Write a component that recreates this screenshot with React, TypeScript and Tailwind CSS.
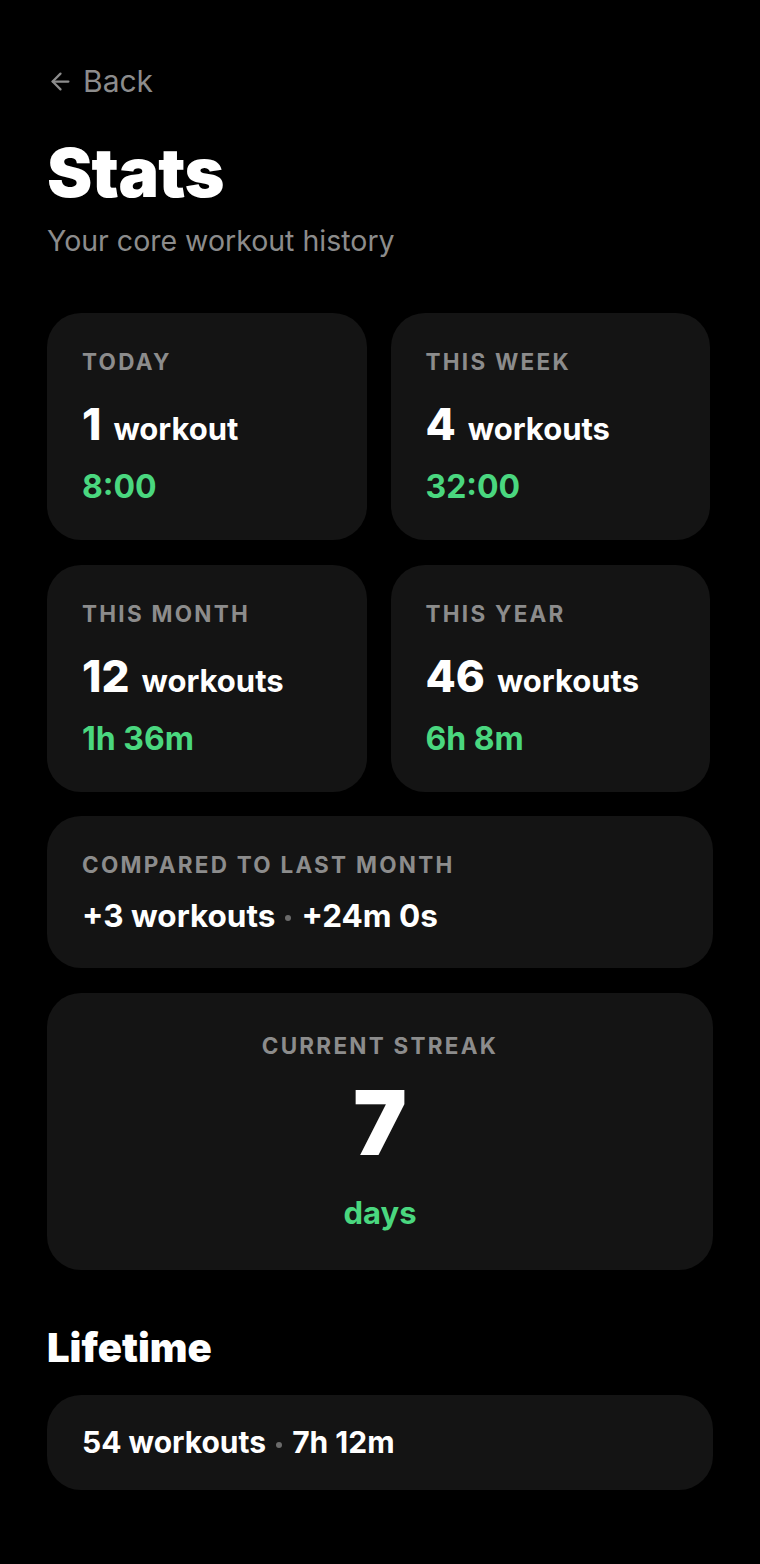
import { ArrowLeft } from "lucide-react";

interface PeriodCardProps {
  label: string;
  count: number;
  unit: string;
  time: string;
}

function PeriodCard({ label, count, unit, time }: PeriodCardProps) {
  return (
    <div className="h-[227px] rounded-[34px] bg-[#141414] pl-[35px] pt-[38px]">
      <div className="text-[22.5px] font-bold tracking-[0.1em] text-[#8c8c8c] leading-none">
        {label}
      </div>
      <div className="mt-[29px] flex items-baseline gap-[12px] leading-none text-white">
        <span className="text-[44px] font-extrabold">{count}</span>
        <span className="text-[31px] font-bold">{unit}</span>
      </div>
      <div className="mt-[25px] text-[32px] font-bold leading-none text-[#4ad77f]">
        {time}
      </div>
    </div>
  );
}

function Dot() {
  return <span className="mx-[10px] inline-block h-[6px] w-[6px] rounded-full bg-[#6b6b6b] align-middle" />;
}

export default function App() {
  return (
    <div
      className="min-h-[1564px] w-full bg-black text-white antialiased"
      style={{ fontFamily: "Inter, 'Noto Sans', sans-serif" }}
    >
      <div className="px-[47px] pt-[66px]">
        <button className="flex items-center gap-[9px] text-[30px] leading-none text-[#8c8c8c]">
          <ArrowLeft className="h-[27px] w-[27px]" strokeWidth={2} />
          <span>Back</span>
        </button>

        <h1 className="mt-[42px] text-[68px] font-black leading-none tracking-[-0.01em]">Stats</h1>
        <p className="mt-[21px] text-[28.5px] leading-none text-[#8c8c8c]">Your core workout history</p>

        <div className="mt-[57px] mr-[3px] grid grid-cols-2 gap-x-[24px] gap-y-[25px]">
          <PeriodCard label="TODAY" count={1} unit="workout" time="8:00" />
          <PeriodCard label="THIS WEEK" count={4} unit="workouts" time="32:00" />
          <PeriodCard label="THIS MONTH" count={12} unit="workouts" time="1h 36m" />
          <PeriodCard label="THIS YEAR" count={46} unit="workouts" time="6h 8m" />
        </div>

        <div className="mt-[24px] h-[152px] rounded-[34px] bg-[#141414] pl-[35px] pt-[38px]">
          <div className="text-[22.5px] font-bold tracking-[0.1em] text-[#8c8c8c] leading-none">
            COMPARED TO LAST MONTH
          </div>
          <div className="mt-[24px] text-[31.5px] font-bold leading-none">
            +3 workouts<Dot />+24m 0s
          </div>
        </div>

        <div className="mt-[25px] flex h-[277px] flex-col items-center rounded-[34px] bg-[#141414] pt-[42px]">
          <div className="text-[22.5px] font-bold tracking-[0.1em] text-[#8c8c8c] leading-none">
            CURRENT STREAK
          </div>
          <div className="mt-[21px] text-[90px] font-black leading-none">7</div>
          <div className="mt-[29px] text-[31px] font-bold leading-none text-[#4ad77f]">days</div>
        </div>

        <h2 className="mt-[58px] text-[40px] font-black leading-none">Lifetime</h2>

        <div className="mt-[27px] flex h-[95px] items-center rounded-[34px] bg-[#141414] pl-[35px]">
          <span className="text-[30px] font-bold leading-none">
            54 workouts<Dot />7h 12m
          </span>
        </div>
      </div>
    </div>
  );
}
